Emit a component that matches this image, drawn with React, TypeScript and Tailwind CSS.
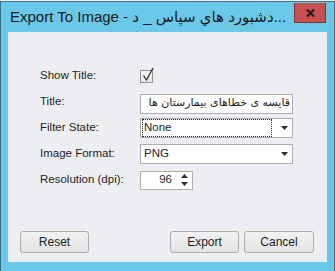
import React from 'react';

const Arrow = () => (
    <svg width="7" height="4" viewBox="0 0 7 4" className="shrink-0"><path d="M0 0h7L3.5 4z" fill="#303030" /></svg>
);

const Row = ({ label, children }: { label: string; children: React.ReactNode }) => (
    <div className="flex h-[26px] items-center">
        <div className="w-[100px] shrink-0">{label}</div>
        {children}
    </div>
);

const Btn = ({ label, w }: { label: string; w: string }) => (
    <button className={`${w} h-[22px] rounded-[3px] border border-[#adadad] bg-gradient-to-b from-[#f2f2f2] to-[#e3e3e3] text-[#1e1e1e] text-[12px]`}>
        {label}
    </button>
);

export default function App() {
    return (
        <div className="w-[335px] h-[271px] bg-[#f0f0f0] pt-[1px] font-['Liberation_Sans',sans-serif] text-[11.5px] text-[#1e1e1e]">
            <div className="h-[270px] flex flex-col bg-[#6ac8e8] border-l border-r border-t border-[#3d6f85]">
                {/* title bar */}
                <div className="h-[30px] flex items-start shrink-0">
                    <div className="flex-1 pl-[9px] pt-[6px] text-[15px] leading-[18px] text-[#1a1a1a] whitespace-nowrap overflow-hidden font-['Liberation_Sans','DejaVu_Sans',sans-serif]">
                        Export To Image - دشبورد هاي سپاس _ د...
                    </div>
                    <div className="w-[32px] h-[20px] mt-[1px] mr-[8px] bg-[#c75050] border border-[#8b3030] border-t-0 flex items-center justify-center">
                        <svg width="9" height="8" viewBox="0 0 9 8"><path d="M1 0.5l7 7M8 0.5l-7 7" stroke="#1a1a1a" strokeWidth="2" /></svg>
                    </div>
                </div>
                {/* client */}
                <div className="flex-1 mx-[7px] mb-[9px] bg-[#eceef1] flex flex-col pt-[31px] pl-[32px] pb-[9px]">
                    <Row label="Show Title:">
                        <div className="relative w-[13px] h-[13px] mt-[1px] border border-[#8e8f8f] bg-gradient-to-b from-[#f4f4f4] to-[#e8e8e8]">
                            <svg className="absolute left-[1px] -top-[4px]" width="12" height="15" viewBox="0 0 12 15">
                                <path d="M1.5 8.5l3 4.5L11 1" fill="none" stroke="#333" strokeWidth="1.3" />
                            </svg>
                        </div>
                    </Row>
                    <Row label="Title:">
                        <div dir="rtl" className="w-[153px] h-[20px] mt-[3px] border border-[#abadb3] bg-white px-[2px] flex items-center overflow-hidden whitespace-nowrap font-['DejaVu_Sans',sans-serif] text-[11px]">
                            قایسه ی خطاهای بیمارستان ها
                        </div>
                    </Row>
                    <Row label="Filter State:">
                        <div className="w-[153px] h-[20px] border border-[#abadb3] bg-white flex items-center pl-[1px] pr-[4px]">
                            <div className="flex-1 h-[18px] border border-dotted border-[#222] flex items-center pl-[1px]">None</div>
                            <div className="w-[16px] flex justify-end"><Arrow /></div>
                        </div>
                    </Row>
                    <Row label="Image Format:">
                        <div className="w-[153px] h-[20px] border border-[#abadb3] bg-white flex items-center pl-[3px] pr-[4px]">
                            <div className="flex-1">PNG</div>
                            <Arrow />
                        </div>
                    </Row>
                    <Row label="Resolution (dpi):">
                        <div className="w-[53px] h-[19px] border border-[#abadb3] bg-white flex items-center pr-[4px]">
                            <div className="flex-1 text-right pr-[9px]">96</div>
                            <div className="flex flex-col gap-[4px]">
                                <svg width="7" height="4" viewBox="0 0 7 4"><path d="M0 4h7L3.5 0z" fill="#303030" /></svg>
                                <svg width="7" height="4" viewBox="0 0 7 4"><path d="M0 0h7L3.5 4z" fill="#303030" /></svg>
                            </div>
                        </div>
                    </Row>
                    <div className="mt-auto flex items-center -ml-[20px] pr-[13px]">
                        <Btn label="Reset" w="w-[69px]" />
                        <div className="flex-1" />
                        <Btn label="Export" w="w-[69px]" />
                        <div className="w-[5px]" />
                        <Btn label="Cancel" w="w-[70px]" />
                    </div>
                </div>
            </div>
        </div>
    );
}
